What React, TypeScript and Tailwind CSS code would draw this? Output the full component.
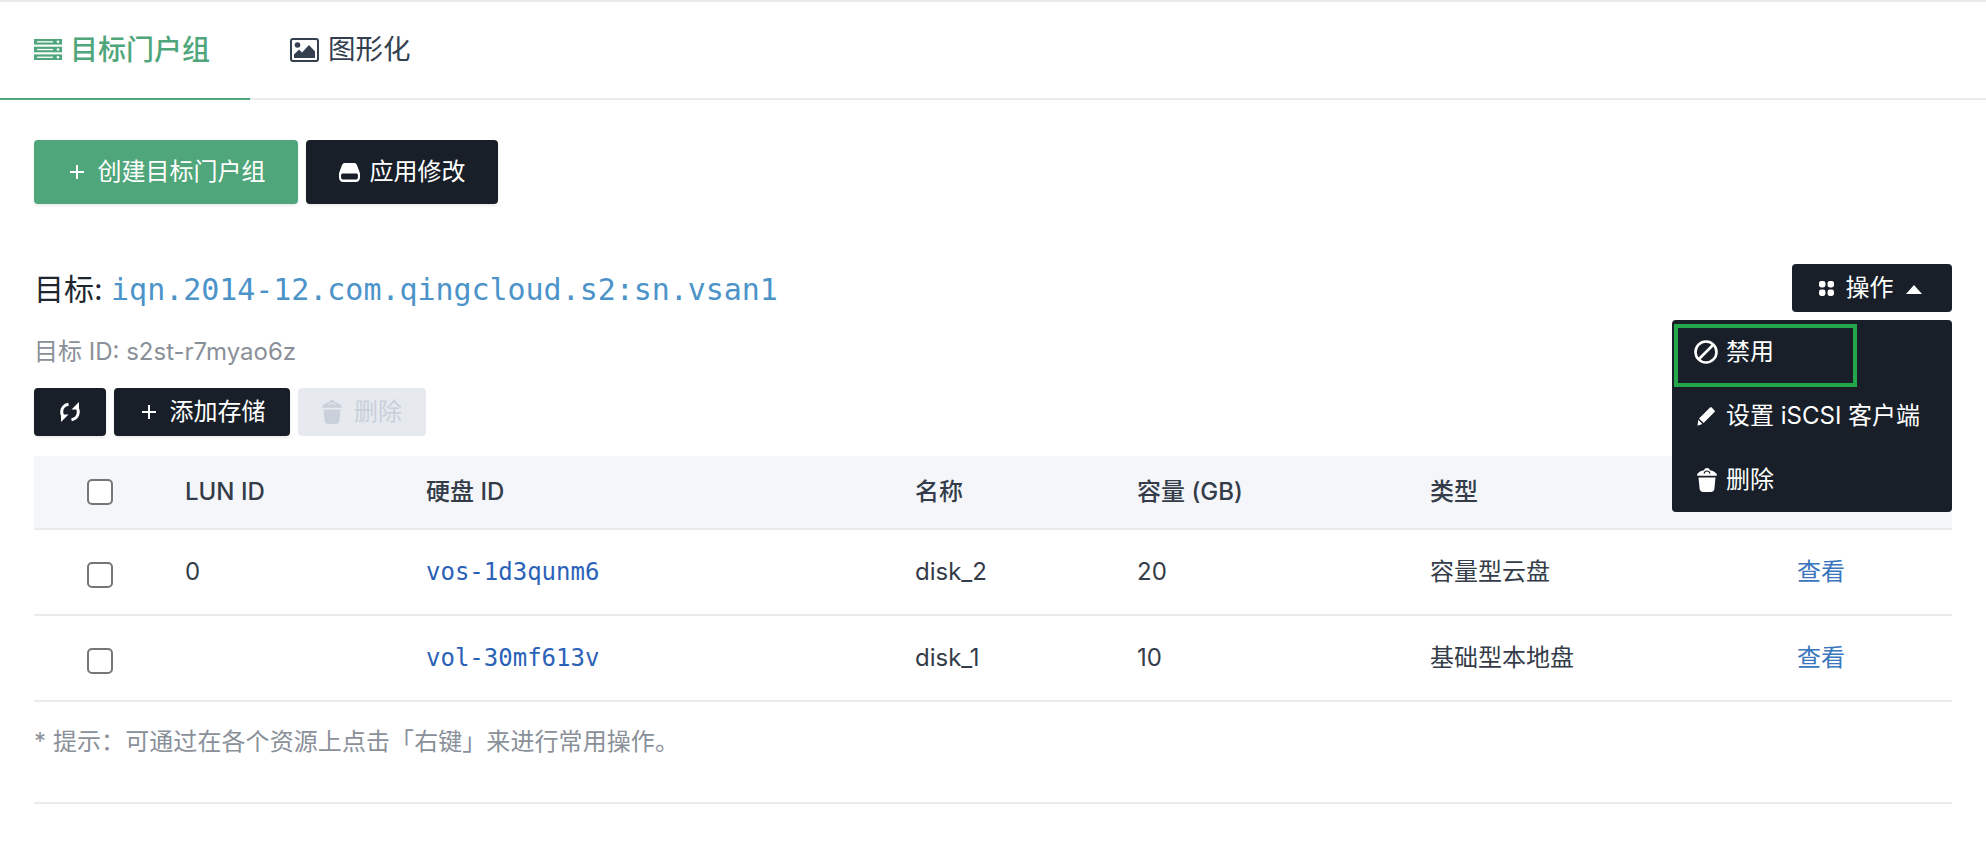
import React from "react";

const mono = "font-['DejaVu_Sans_Mono','Noto_Sans_CJK_SC',monospace]";

function Trash({ className, hole }: { className?: string; hole: string }) {
  return (
    <svg viewBox="0 0 20 24" className={className} fill="currentColor">
      <path d="M10 0c1.500 0 2.600.9 2.900 2.200C16.200 2.800 18.800 4.200 20 6.400c.3.800-.1 1.300-.9 1.300H.9c-.8 0-1.200-.5-.9-1.300C1.200 4.200 3.800 2.800 7.100 2.200 7.400.9 8.500 0 10 0z" />
      <path d="M7 5.500C7.500 3.800 8.600 3 10 3s2.500.8 3 2.500" fill="none" stroke={hole} strokeWidth="1.200" />
      <path d="M1.500 9.500h17l-1.100 11.300c-.2 2-1.500 3.200-3.500 3.200H6.100c-2 0-3.300-1.200-3.500-3.200z" />
    </svg>
  );
}

function Hdd({ className }: { className?: string }) {
  return (
    <svg viewBox="0 0 21 19" className={className} fill="currentColor">
      <path fillRule="evenodd" d="M6 0h9c1.400 0 2.300.6 2.800 1.700l2.600 6.800c.4 1 .6 1.800.6 2.800v3.200c0 2.500-1.700 4.500-4.200 4.500H4.200C1.700 19 0 17 0 14.500v-3.200c0-1 .2-1.800.6-2.800l2.600-6.800C3.700.6 4.600 0 6 0zM3.800 10.500c-1 0-1.700.7-1.700 1.700v2.200c0 1.200.9 2.100 2.100 2.100h12.600c1.200 0 2.100-.9 2.100-2.100v-2.200c0-1-.7-1.700-1.700-1.700z" />
    </svg>
  );
}

function Sync({ className }: { className?: string }) {
  return (
    <svg viewBox="0 0 20 20" className={className} fill="none" stroke="currentColor" strokeWidth="3">
      <path d="M8.500 2.300C4.200 3 1.700 6.200 1.700 10c0 2.400 1 4.200 2.600 5.600" />
      <path d="M11.500 17.700c4.300-.7 6.800-3.900 6.800-7.700 0-2.400-1-4.200-2.600-5.600" />
      <path d="M1 20v-7.500h7.500z" fill="currentColor" stroke="none" />
      <path d="M19 0v7.500h-7.500z" fill="currentColor" stroke="none" />
    </svg>
  );
}

function Grid4({ className }: { className?: string }) {
  return (
    <svg viewBox="0 0 14 14" className={className} fill="currentColor">
      <rect x="0" y="0" width="6" height="6" rx="2" />
      <rect x="8" y="0" width="6" height="6" rx="2" />
      <rect x="0" y="8" width="6" height="6" rx="2" />
      <rect x="8" y="8" width="6" height="6" rx="2" />
    </svg>
  );
}

function Plus({ className }: { className?: string }) {
  return (
    <svg viewBox="0 0 14 14" className={className} stroke="currentColor" strokeWidth="2" fill="none">
      <path d="M7 0v14M0 7h14" />
    </svg>
  );
}

function Server({ className }: { className?: string }) {
  const bar = (y: number) => (
    <g key={y}>
      <rect x="0" y={y} width="28" height="5.600" fill="currentColor" />
      <rect x="3" y={y + 2.200} width="16" height="1.300" fill="#fff" />
      <circle cx="24" cy={y + 2.800} r="1.300" fill="#fff" />
    </g>
  );
  return (
    <svg viewBox="0 0 28 21" className={className}>
      {bar(0)}
      {bar(7.700)}
      {bar(15.400)}
    </svg>
  );
}

function Picture({ className }: { className?: string }) {
  return (
    <svg viewBox="0 0 29 24" className={className}>
      <rect x="1" y="1" width="27" height="22" rx="2" fill="none" stroke="currentColor" strokeWidth="2" />
      <circle cx="7.500" cy="7" r="2.800" fill="currentColor" />
      <path d="M4 20v-3.500l5-5 3 3 7-7.500 6 6.500V20z" fill="currentColor" />
    </svg>
  );
}

function Ban({ className }: { className?: string }) {
  return (
    <svg viewBox="0 0 24 24" className={className} fill="none" stroke="currentColor" strokeWidth="2.600">
      <circle cx="12" cy="12" r="10.500" />
      <path d="M19.500 4.500L4.500 19.500" />
    </svg>
  );
}

function Pencil({ className }: { className?: string }) {
  return (
    <svg viewBox="0 0 18 19" className={className} fill="currentColor">
      <path d="M13 .5c.5-.5 1.200-.5 1.700 0l2.800 2.900c.5.500.5 1.200 0 1.700L6.600 16 2 11.500z" />
      <path d="M1.300 12.700L5.400 17 .5 18.700z" />
    </svg>
  );
}

function Check() {
  return <span className="block w-[26px] h-[26px] rounded-[5px] border-2 border-[#767676] bg-white" />;
}

const cols = "grid grid-cols-[151px_241px_489px_222px_293px_367px_1fr] items-center";

function Row({ lun, disk, name, size, type }: { lun: string; disk: string; name: string; size: string; type: string }) {
  return (
    <div className={`${cols} h-[86px] border-b-2 border-[#e9ecef] text-[24px] text-[#343c49]`}>
      <div className="pl-[53px] pt-[5px]"><Check /></div>
      <div className="-mt-[1px]">{lun}</div>
      <div className={`${mono} text-[#2b62b8] text-[24px]`}>{disk}</div>
      <div>{name}</div>
      <div>{size}</div>
      <div>{type}</div>
      <div className="text-[#3a76bd]">查看</div>
    </div>
  );
}

export default function App() {
  return (
    <div className="relative w-[1986px] h-[858px] bg-white overflow-hidden border-t-2 border-[#e9ecef] font-['Inter','Noto_Sans_CJK_SC',sans-serif]">
      <div className="flex h-[98px] border-b-2 border-[#e9ecef]">
        <div className="flex items-center w-[250px] h-[98px] pl-[34px] gap-[8px] border-b-2 border-[#4fa67a] text-[#4fa67a] text-[28px] font-medium">
          <Server className="w-[28px] h-[21px] -mt-[2px]" />
          <span>目标门户组</span>
        </div>
        <div className="flex items-center h-[96px] pl-[40px] gap-[9px] text-[#343f50] text-[27.5px]">
          <Picture className="w-[29px] h-[24px]" />
          <span>图形化</span>
        </div>
      </div>

      <div className="px-[34px]">
        <div className="flex gap-[8px] pt-[40px]">
          <button className="flex items-center justify-center w-[264px] h-[64px] pl-[3px] gap-[14px] rounded-[4px] bg-[#4fa67a] text-white text-[24px] shadow-[0_2px_3px_rgba(0,0,0,0.08)]">
            <Plus className="w-[14px] h-[14px]" />
            <span>创建目标门户组</span>
          </button>
          <button className="flex items-center justify-center w-[192px] h-[64px] gap-[10px] rounded-[4px] bg-[#181f29] text-white text-[24px] shadow-[0_2px_3px_rgba(0,0,0,0.08)]">
            <Hdd className="w-[21px] h-[19px]" />
            <span>应用修改</span>
          </button>
        </div>

        <div className="flex items-center justify-between mt-[60px] h-[48px]">
          <div className="text-[30px] text-[#20262f] leading-[48px] pt-[2px]">
            <span>目标: </span>
            <span className={`${mono} text-[#4b93c9] tracking-[-0.04px]`}>iqn.2014-12.com.qingcloud.s2:sn.vsan1</span>
          </div>
          <button className="flex items-center justify-center w-[160px] h-[48px] pr-[4px] gap-[12px] rounded-[4px] bg-[#181f29] text-white text-[24px]">
            <Grid4 className="w-[15px] h-[15px]" />
            <span>操作</span>
            <span className="mt-[3px] w-0 h-0 border-x-[8px] border-b-[9px] border-x-transparent border-b-white" />
          </button>
        </div>

        <div className="mt-[23px] text-[24px] leading-[34px] text-[#8a9099]">目标 ID: s2st-r7myao6z</div>

        <div className="flex gap-[8px] mt-[19px]">
          <button className="flex items-center justify-center w-[72px] h-[48px] rounded-[4px] bg-[#181f29] text-white shadow-[0_2px_3px_rgba(0,0,0,0.08)]">
            <Sync className="w-[20px] h-[20px]" />
          </button>
          <button className="flex items-center justify-center w-[176px] h-[48px] pl-[3px] gap-[14px] rounded-[4px] bg-[#181f29] text-white text-[24px] shadow-[0_2px_3px_rgba(0,0,0,0.08)]">
            <Plus className="w-[14px] h-[14px]" />
            <span>添加存储</span>
          </button>
          <button className="flex items-center justify-center w-[128px] h-[48px] gap-[12px] rounded-[4px] bg-[#e6eaef] text-[#c9d0d9] text-[24px]">
            <Trash className="w-[20px] h-[24px]" hole="#e6eaef" />
            <span>删除</span>
          </button>
        </div>

        <div className={`${cols} h-[74px] mt-[20px] bg-[#f4f6fa] border-b-2 border-[#e9ecef] text-[24px] font-medium text-[#343c49]`}>
          <div className="pl-[53px]"><Check /></div>
          <div>LUN ID</div>
          <div>硬盘 ID</div>
          <div>名称</div>
          <div>容量 (GB)</div>
          <div>类型</div>
          <div />
        </div>
        <Row lun="0" disk="vos-1d3qunm6" name="disk_2" size="20" type="容量型云盘" />
        <Row lun="" disk="vol-30mf613v" name="disk_1" size="10" type="基础型本地盘" />

        <div className="h-[102px] pt-[23px] border-b-2 border-[#e9ecef] text-[24px] leading-[34px] text-[#8a9099] tracking-[0.08px]">
          * 提示：可通过在各个资源上点击「右键」来进行常用操作。
        </div>
      </div>

      <div className="absolute left-[1672px] top-[318px] w-[280px] h-[192px] rounded-[4px] bg-[#181f29] text-white text-[24px] flex flex-col pl-[22px]">
        <div className="flex items-center h-[64px] gap-[8px]">
          <Ban className="w-[24px] h-[24px]" />
          <span>禁用</span>
        </div>
        <div className="flex items-center h-[64px] gap-[11px] pl-[3px]">
          <Pencil className="w-[18px] h-[19px]" />
          <span>设置 iSCSI 客户端</span>
        </div>
        <div className="flex items-center h-[64px] gap-[9px] pl-[3px]">
          <Trash className="w-[20px] h-[24px]" hole="#181f29" />
          <span>删除</span>
        </div>
      </div>
      <div className="absolute left-[1674px] top-[322px] w-[183px] h-[63px] border-[4px] border-[#22a84a]" />
    </div>
  );
}
